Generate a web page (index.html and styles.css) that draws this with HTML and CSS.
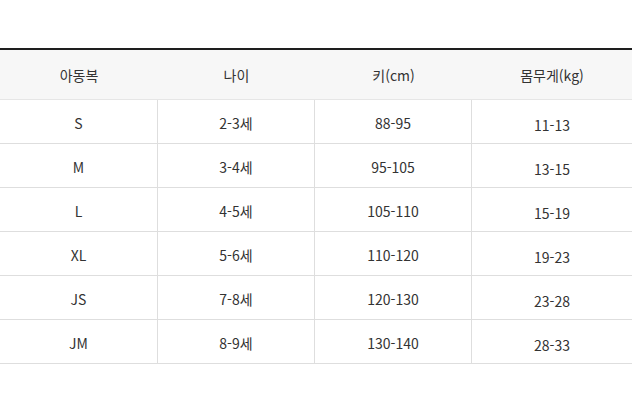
FILE: index.html
```html
<!DOCTYPE html>
<html lang="ko">
<head>
<meta charset="utf-8">
<link rel="stylesheet" href="styles.css">
</head>
<body>
<div class="size-table">
  <div class="cell head">아동복</div>
  <div class="cell head">나이</div>
  <div class="cell head">키(cm)</div>
  <div class="cell head">몸무게(kg)</div>

  <div class="cell">S</div><div class="cell">2-3세</div><div class="cell">88-95</div><div class="cell last">11-13</div>
  <div class="cell">M</div><div class="cell">3-4세</div><div class="cell">95-105</div><div class="cell last">13-15</div>
  <div class="cell">L</div><div class="cell">4-5세</div><div class="cell">105-110</div><div class="cell last">15-19</div>
  <div class="cell">XL</div><div class="cell">5-6세</div><div class="cell">110-120</div><div class="cell last">19-23</div>
  <div class="cell">JS</div><div class="cell">7-8세</div><div class="cell">120-130</div><div class="cell last">23-28</div>
  <div class="cell">JM</div><div class="cell">8-9세</div><div class="cell">130-140</div><div class="cell last">28-33</div>
</div>
</body>
</html>
```
FILE: styles.css
```css
html, body {
  margin: 0;
  padding: 0;
  background: #ffffff;
}
body {
  padding-top: 48px;
  font-family: "Noto Sans CJK KR", "Noto Sans", sans-serif;
  font-size: 14px;
  color: #333333;
}
.size-table {
  width: 632px;
  display: grid;
  grid-template-columns: 158px 157px 157px 160px;
  grid-auto-rows: 44px;
  grid-template-rows: 50px;
  border-top: 2px solid #1e1e1e;
}
.cell {
  display: flex;
  align-items: center;
  justify-content: center;
  border-bottom: 1px solid #dedede;
  border-right: 1px solid #dedede;
  padding-top: 2px;
  box-sizing: border-box;
}
.cell.last {
  border-right: none;
  padding-top: 6px;
}
.cell.head {
  background: #f7f7f7;
  border-right: none;
  border-bottom: 1px solid #e6e6e6;
  padding-top: 0;
}
```
